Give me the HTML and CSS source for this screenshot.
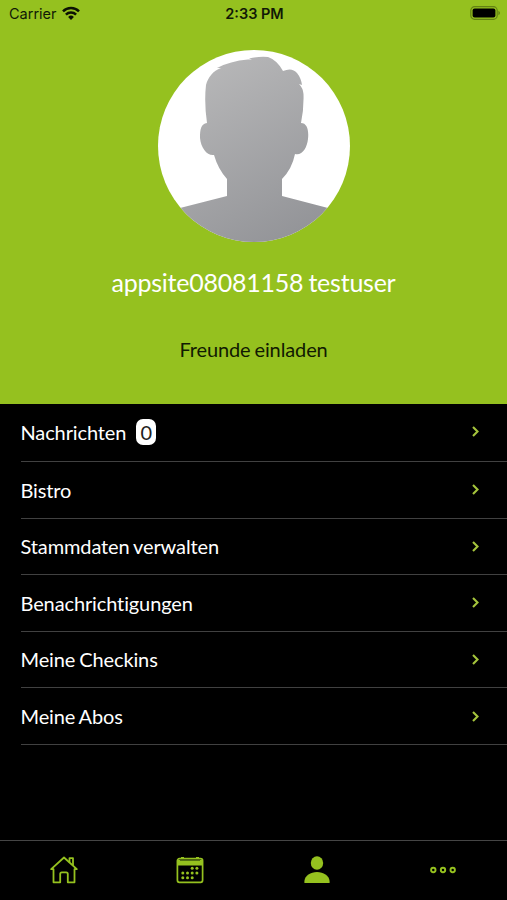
FILE: index.html
```html
<!DOCTYPE html>
<html lang="de">
<head>
    <meta charset="UTF-8">
    <meta name="viewport" content="width=device-width, initial-scale=1.0">
    <title>Profil</title>
    <link rel="stylesheet" href="styles.css">
</head>
<body>
    <header class="profile">
        <div class="status-bar">
            <div class="carrier">
                <span>Carrier</span>
                <svg class="wifi" width="18" height="14" viewBox="0 0 18 14">
                    <path d="M1 5.4a11.3 11.3 0 0 1 16 0M3.9 8.6a7.2 7.2 0 0 1 10.200 0" fill="none" stroke="#0c1204" stroke-width="2.5"/>
                    <path d="M9 13.9L6.1 11a4.200 4.200 0 0 1 5.800 0z" fill="#0c1204"/>
                </svg>
            </div>
            <span class="time">2:33 PM</span>
            <svg class="battery" width="30" height="14" viewBox="0 0 30 14">
                <rect x="0.8" y="0.7" width="26.4" height="12.6" rx="3.8" fill="none" stroke="#638213" stroke-width="1.2"/>
                <rect x="2.6" y="2.5" width="22.8" height="9" rx="2" fill="#000"/>
                <path d="M28.4 4.8q1.6 .7 1.6 2.2t-1.6 2.2z" fill="#638213"/>
            </svg>
        </div>
        <svg class="avatar" width="192" height="192" viewBox="0 0 192 192">
            <defs>
                <linearGradient id="shade" x1="0.2" y1="0" x2="0.8" y2="1">
                    <stop offset="0" stop-color="#b9b9ba"/>
                    <stop offset="1" stop-color="#919296"/>
                </linearGradient>
                <clipPath id="round"><circle cx="96" cy="96" r="96"/></clipPath>
            </defs>
            <circle cx="96" cy="96" r="96" fill="#fff"/>
            <path clip-path="url(#round)" fill="url(#shade)" d="M0 164L22 158L69 146V129Q60 119 56 105C49 106 43 98 42 88C42 79 43 74 49 73Q46 52 48 35C50 27 55 21 63 18L59 18Q72 11 90 9.500L94 9.500L91 8.500Q102 6 110 7Q119 10 125 21Q134 17 139 23Q143 28 144 35L141 34Q145 38 145.500 44Q146 59 143 73C149 73 151 80 150 89C149 98 144 106 137 104Q134 119 124 129V146L170 158L192 164V192H0z"/>
        </svg>
        <h1 class="name">appsite08081158 testuser</h1>
        <a class="invite">Freunde einladen</a>
    </header>

    <ul class="menu">
        <li class="item">
            <span>Nachrichten</span><span class="badge">0</span>
            <svg class="chevron" width="7" height="11" viewBox="0 0 7 11"><path d="M1 1L5.5 5.5L1 10"/></svg>
        </li>
        <li class="item">
            <span>Bistro</span>
            <svg class="chevron" width="7" height="11" viewBox="0 0 7 11"><path d="M1 1L5.5 5.5L1 10"/></svg>
        </li>
        <li class="item">
            <span>Stammdaten verwalten</span>
            <svg class="chevron" width="7" height="11" viewBox="0 0 7 11"><path d="M1 1L5.5 5.5L1 10"/></svg>
        </li>
        <li class="item">
            <span>Benachrichtigungen</span>
            <svg class="chevron" width="7" height="11" viewBox="0 0 7 11"><path d="M1 1L5.5 5.5L1 10"/></svg>
        </li>
        <li class="item">
            <span>Meine Checkins</span>
            <svg class="chevron" width="7" height="11" viewBox="0 0 7 11"><path d="M1 1L5.5 5.5L1 10"/></svg>
        </li>
        <li class="item">
            <span>Meine Abos</span>
            <svg class="chevron" width="7" height="11" viewBox="0 0 7 11"><path d="M1 1L5.5 5.5L1 10"/></svg>
        </li>
    </ul>

    <nav class="tabs">
        <a class="tab">
            <svg width="30" height="30" viewBox="0 0 30 30" fill="none" stroke="#95c11f" stroke-width="1.8" stroke-linejoin="round" stroke-linecap="round">
                <path d="M2.2 14.2L15 2.500L27.8 14.2H25.500V27.3H18.8V19Q18.8 17.4 17.2 17.4H12.8Q11.2 17.4 11.2 19V27.3H4.500V14.2z"/>
                <path d="M20.5 7V3.2H24V10"/>
            </svg>
        </a>
        <a class="tab">
            <svg width="30" height="30" viewBox="0 0 30 30" fill="#95c11f">
                <rect x="2.4" y="3.7" width="25.2" height="23.6" rx="2" fill="none" stroke="#95c11f" stroke-width="1.7"/>
                <path d="M3 5H27V10.400H3zM6 2H9V4H6zM21 2H24V4H21z"/>
                <path d="M5 5.5H25" stroke="#527011" stroke-width="1"/>
                <g>
                    <circle cx="17.2" cy="13.2" r="1.5"/><circle cx="21.9" cy="13.2" r="1.5"/>
                    <circle cx="7.8" cy="18" r="1.5"/><circle cx="12.5" cy="18" r="1.5"/><circle cx="17.2" cy="18" r="1.5"/><circle cx="21.9" cy="18" r="1.5"/>
                    <circle cx="7.8" cy="22.7" r="1.5"/><circle cx="12.5" cy="22.7" r="1.5"/><circle cx="17.2" cy="22.7" r="1.5"/>
                </g>
            </svg>
        </a>
        <a class="tab">
            <svg width="30" height="30" viewBox="0 0 30 30" fill="#95c11f">
                <ellipse cx="15" cy="8" rx="6.2" ry="6.7"/>
                <path d="M2.4 28V26C3 20.5 8.5 17 15 17S27 20.5 27.6 26V28z"/>
            </svg>
        </a>
        <a class="tab">
            <svg width="30" height="30" viewBox="0 0 30 30" fill="none" stroke="#95c11f" stroke-width="1.9">
                <circle cx="5.3" cy="15" r="2.2"/><circle cx="15" cy="15" r="2.2"/><circle cx="24.7" cy="15" r="2.2"/>
            </svg>
        </a>
    </nav>
</body>
</html>
```
FILE: styles.css
```css
body {
    margin: 0;
    height: 900px;
    display: flex;
    flex-direction: column;
    background: #000;
    color: #fff;
    font-family: Lato, sans-serif;
    font-size: 20px;
    letter-spacing: -0.12px;
    word-spacing: -1px;
    overflow: hidden;
}

.profile {
    height: 403.5px;
    display: flex;
    flex-direction: column;
    align-items: center;
    background: #95c11f;
}

.status-bar {
    box-sizing: border-box;
    width: 100%;
    height: 27px;
    padding: 0 7px 0 9px;
    display: grid;
    grid-template-columns: 1fr auto 1fr;
    align-items: center;
    color: #111906;
    font-family: Inter, sans-serif;
    font-size: 14.5px;
    letter-spacing: 0;
    word-spacing: 0;
}

.carrier {
    display: flex;
    align-items: center;
    gap: 5px;
}

.wifi {
    margin-bottom: 2px;
}

.time {
    font-weight: 600;
}

.battery {
    justify-self: end;
    margin-bottom: 1px;
}

.avatar {
    margin-top: 23px;
}

.name {
    margin: 25px 0 0;
    font-size: 25px;
    font-weight: 400;
    line-height: 30px;
    letter-spacing: -0.24px;
}

.invite {
    margin-top: 40px;
    color: #111a02;
    line-height: 24px;
}

.menu {
    margin: 0;
    padding: 0 0 0 20.5px;
    list-style: none;
}

.item {
    box-sizing: border-box;
    height: 56.6px;
    padding-right: 28px;
    display: flex;
    align-items: center;
    border-bottom: 1px solid #414141;
}

.item:first-child {
    height: 58px;
    padding-bottom: 1px;
}

.item:nth-child(2) {
    height: 57px;
}

.badge {
    width: 20px;
    height: 26px;
    margin-left: 10px;
    border-radius: 7px;
    background: #fff;
    color: #222;
    line-height: 26px;
    text-align: center;
}

.chevron {
    margin-left: auto;
    fill: none;
    stroke: #a5c43c;
    stroke-width: 2.1;
}

.tabs {
    box-sizing: border-box;
    height: 60px;
    margin-top: auto;
    padding: 0 1px 2px;
    display: grid;
    grid-template-columns: repeat(4, 1fr);
    border-top: 1px solid #454545;
}

.tab {
    display: flex;
    align-items: center;
    justify-content: center;
}
```
